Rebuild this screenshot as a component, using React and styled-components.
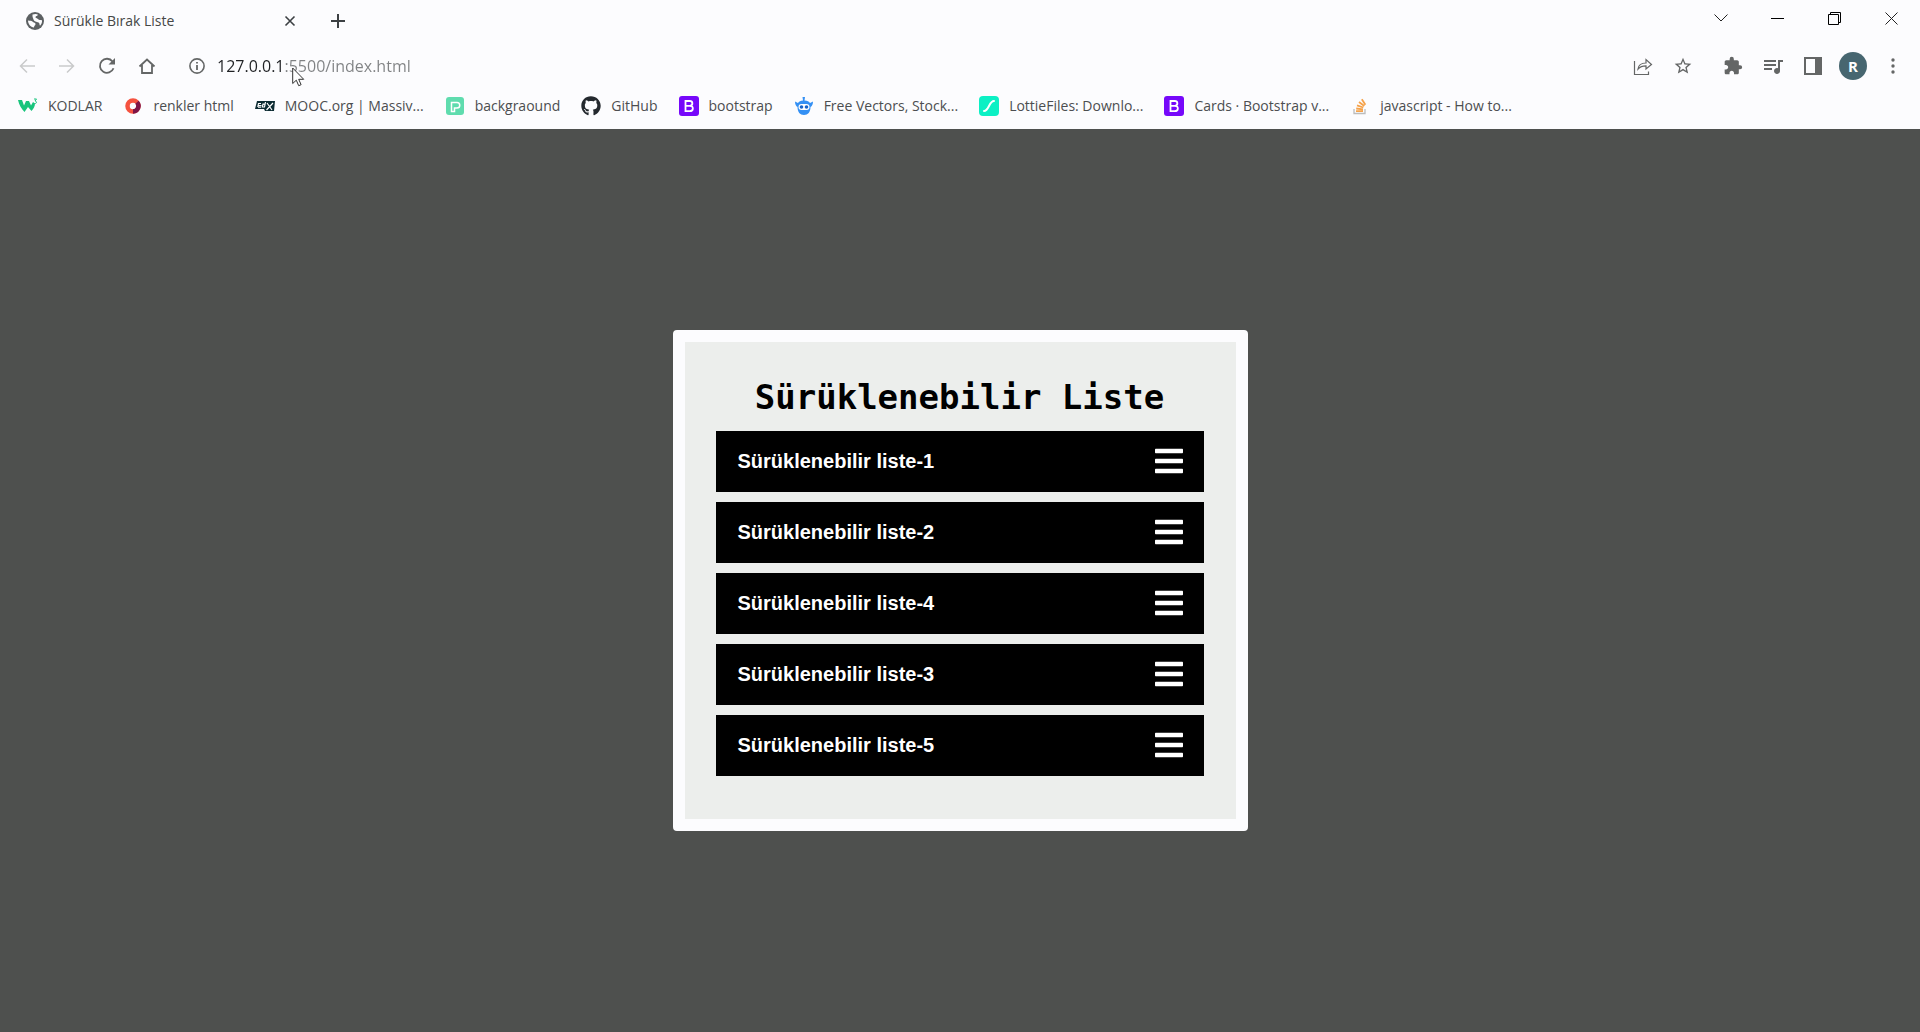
import React from "react";
import styled, { createGlobalStyle } from "styled-components";
import { FaGithub, FaBars } from "react-icons/fa";
import { MdStarOutline, MdExtension, MdQueueMusic } from "react-icons/md";

const GlobalStyle = createGlobalStyle`
  *, *::before, *::after { box-sizing: border-box; }
  html, body, #root { height: 100%; }
  body { margin: 0; font-family: "Open Sans", "Noto Sans", sans-serif; }
  button { font: inherit; color: inherit; background: none; border: 0; padding: 0; }
  svg { display: block; flex: none; }
`;

const Browser = styled.div`
  position: relative;
  min-height: 100%;
  display: flex;
  flex-direction: column;
`;

const Chrome = styled.header`
  background: #fcfcfe;
  color: #454746;
  padding-bottom: 6px;
`;

const TabStrip = styled.div`
  display: flex;
  align-items: center;
  height: 42px;
  padding-left: 26px;
`;

const Tab = styled.div`
  display: flex;
  align-items: center;
  width: 270px;
  gap: 10px;
  font-size: 14px;
  line-height: 20px;
`;

const TabTitle = styled.span`
  flex: 1;
`;

const IconButton = styled.button`
  display: grid;
  place-items: center;
  width: ${(p) => p.$w || 40}px;
  height: 36px;
  color: ${(p) => p.$color || "#646666"};
`;

const NewTab = styled(IconButton)`
  margin-left: 22px;
`;

const WindowControls = styled.div`
  display: flex;
  margin-left: auto;
  height: 36px;
  align-self: flex-start;
`;

const Toolbar = styled.div`
  display: flex;
  align-items: center;
  height: 47px;
  padding: 0 7px;
`;

const AddressBar = styled.div`
  flex: 1;
  display: flex;
  align-items: center;
  gap: 8px;
  margin-left: 18px;
`;

const AddressInput = styled.input`
  flex: 1;
  border: 0;
  padding: 0;
  background: linear-gradient(90deg, #1f2124 68px, #808284 68px);
  background-clip: text;
  -webkit-text-fill-color: transparent;
  font: 16px/24px "Open Sans", "Noto Sans", sans-serif;
`;

const ToolbarActions = styled.div`
  display: flex;
  align-items: center;
  margin-left: ${(p) => (p.$apart ? 10 : 0)}px;
`;

const Avatar = styled.button`
  width: 28px;
  height: 28px;
  margin: 0 6px;
  border-radius: 50%;
  background: #476670;
  color: #fff;
  font-size: 15px;
  line-height: 28px;
  font-weight: 700;
`;

const Bookmarks = styled.nav`
  display: flex;
  align-items: center;
  height: 34px;
  padding-left: 18px;
  gap: 21px;
`;

const Bookmark = styled.a`
  display: flex;
  align-items: center;
  gap: 10px;
  color: #4c4e50;
  font-size: 14px;
  line-height: 20px;
  text-decoration: none;
  white-space: nowrap;
`;

const Viewport = styled.main`
  flex: 1;
  display: flex;
  align-items: center;
  justify-content: center;
  background: #4e504e;
`;

const Card = styled.section`
  width: 575px;
  padding: 32px 32px 33px 31px;
  border: 12px solid #fcfcfe;
  border-radius: 4px;
  background: #eceeec;
  background-clip: padding-box;
`;

const Title = styled.h1`
  margin: 0 0 10px;
  color: #000;
  font: bold 34px/47px "DejaVu Sans Mono", monospace;
  text-align: center;
`;

const List = styled.ul`
  margin: 0;
  padding: 0;
  list-style: none;
`;

const Item = styled.li`
  display: flex;
  align-items: center;
  justify-content: space-between;
  height: 61px;
  margin-bottom: 10px;
  padding: 0 19px 2px 22px;
  background: #000;
  color: #fff;
  font: bold 20px/24px "Liberation Sans", Arial, sans-serif;
`;

const Pointer = styled.svg`
  position: absolute;
  left: 292px;
  top: 67px;
`;

const Glyph = ({ size = 20, box = 24, children, ...rest }) => (
  <svg width={size} height={size} viewBox={`0 0 ${box} ${box}`} fill="none" stroke="currentColor" strokeWidth="2" aria-hidden="true" {...rest}>
    {children}
  </svg>
);

const Globe = () => (
  <Glyph size={18} box={18} stroke="none">
    <circle cx="9" cy="9" r="9" fill="#5c6062" />
    <path d="M2 8.500c2 .3 4 .2 5 1.500 1 1 2.500.6 2.500 2 0 1.500-1.500 1.500-1.500 3.500-3.500-.5-6-3.500-6-7z" fill="#fcfcfe" />
    <path d="M6.500 2.500c3-1 4.500-.5 5.500.2-.5 1.300-2.200 1-2.500 2.300-.2 1.300 1.500 1 2.500 2 1 1.200 2.500.8 4 1.200.3 2-.5 4-2 5.500-.8-1.200-.3-2.700-1.500-3.200C10.500 9.500 8 9.500 7.500 7.500 7.200 6 6.200 5 6.500 2.500z" fill="#fcfcfe" />
  </Glyph>
);

const W3 = () => (
  <Glyph box={20} stroke="none">
    <path d="M0 4h4l2 5.500L8 5h3l2 4.500L15 6l2 1.500c0 2.500-1.500 5.500-3.500 7.500L10 11l-3.500 5C3.500 13 1 9 0 4z" fill="#18c47c" />
    <path d="M16 3h2.500L17 5c2 0 2 3-.5 2.500" stroke="#18c47c" strokeWidth="1" />
  </Glyph>
);

const Ring = () => (
  <Glyph box={20}>
    <circle cx="10" cy="10" r="5.500" stroke="#f5523f" strokeWidth="4.500" />
    <path d="M14 6.300a5.500 5.500 0 0 1-4 9.200" stroke="#7d1447" strokeWidth="4.500" />
  </Glyph>
);

const Edx = () => (
  <Glyph box={20} stroke="none">
    <path d="M2 5h18l-1 10H10l-1-2H0z" fill="#0c2b32" />
    <path d="M3 9.500h3.500M3 11.200h3M6 7.500H3.500L2.800 11M10.500 6l-1 5H7.300L8 8.200h2M12 7l5 7M18 7l-6.500 7" stroke="#fff" strokeWidth="1.200" />
  </Glyph>
);

const Patterns = () => (
  <Glyph box={20} stroke="none">
    <rect x="1" y="1" width="18" height="18" rx="3" fill="#5fdcae" />
    <path d="M6.500 15.500v-9h5.500a2.500 2.500 0 0 1 0 5.500H9.500v3.500z" stroke="#fff" strokeWidth="1.500" />
  </Glyph>
);

const Bootstrap = () => (
  <Glyph box={20} stroke="none">
    <rect width="20" height="20" rx="3" fill="#7608fa" />
    <path d="M6.500 5h4.200c3.500 0 3.500 4.600.3 4.800 4 .2 3.700 5.400-.3 5.400H6.500zM6.500 9.800H11" stroke="#fff" strokeWidth="1.800" />
  </Glyph>
);

const Robot = () => (
  <Glyph box={20} stroke="none">
    <path d="M9 4.500 8.500 1h2.500l-.5 3.500c3 0 4.500 1 5.500 2.500l3-1.500c0 3-1 4.500-2.500 5.500C16.500 16 14 19 10 19s-6.500-3-6.500-8C2 10 1 8.500 1 5.500L4 7c1-1.500 2.500-2.500 5-2.500z" fill="#3490f4" />
    <rect x="4.500" y="8" width="11" height="6" rx="3" fill="#fff" />
    <circle cx="7.500" cy="11" r="1.800" fill="#1764c9" />
    <circle cx="12.500" cy="11" r="1.800" fill="#1764c9" />
  </Glyph>
);

const Lottie = () => (
  <Glyph box={20}>
    <rect width="20" height="20" rx="4" fill="#0cf0c4" stroke="none" />
    <path d="M5 15c5 0 5-10 10-10" stroke="#fff" strokeWidth="2" strokeLinecap="round" />
  </Glyph>
);

const StackOverflow = () => (
  <Glyph box={20}>
    <path d="M4 13v4.500h11V13" stroke="#bcbcbc" strokeWidth="1.300" />
    <path d="M6 15.200h7M6.200 12.500l6.800.8M7 9.300l6.300 2.200M9 6l5.300 4M11.800 3.300l3.600 5.500" stroke="#f5a24a" strokeWidth="1.800" />
  </Glyph>
);

const bookmarks = [
  { label: "KODLAR", icon: <W3 /> },
  { label: "renkler html", icon: <Ring /> },
  { label: "MOOC.org | Massiv...", icon: <Edx /> },
  { label: "backgraound", icon: <Patterns /> },
  { label: "GitHub", icon: <FaGithub size={20} color="#24292e" /> },
  { label: "bootstrap", icon: <Bootstrap /> },
  { label: "Free Vectors, Stock...", icon: <Robot /> },
  { label: "LottieFiles: Downlo...", icon: <Lottie /> },
  { label: "Cards · Bootstrap v...", icon: <Bootstrap /> },
  { label: "javascript - How to...", icon: <StackOverflow /> },
];

const items = [1, 2, 4, 3, 5];

export default function App() {
  return (
    <Browser>
      <GlobalStyle />
      <Chrome>
        <TabStrip>
          <Tab>
            <Globe />
            <TabTitle>Sürükle Bırak Liste</TabTitle>
            <IconButton $w={12} aria-label="Close tab" $color="#3c4043">
              <Glyph size={12} box={12}><path d="M1.500 1.500l9 9M10.500 1.500l-9 9" strokeWidth="1.600" /></Glyph>
            </IconButton>
          </Tab>
          <NewTab aria-label="New tab" $color="#3c4043">
            <Glyph size={16} box={16}><path d="M8 1v14M1 8h14" /></Glyph>
          </NewTab>
          <WindowControls>
            <IconButton $w={57} $color="#222" aria-label="Search tabs">
              <Glyph size={14} box={14}><path d="M.5 3.500 7 10l6.500-6.500" strokeWidth="1" /></Glyph>
            </IconButton>
            <IconButton $w={57} $color="#000" aria-label="Minimize">
              <Glyph size={13} box={13}><path d="M0 6.500h13" strokeWidth="1" /></Glyph>
            </IconButton>
            <IconButton $w={57} $color="#000" aria-label="Restore">
              <Glyph size={13} box={13}><path d="M.5 2.500h10v10H.5zM2.500 2.500v-2h10v10h-2" strokeWidth="1" /></Glyph>
            </IconButton>
            <IconButton $w={57} $color="#222" aria-label="Close">
              <Glyph size={13} box={13}><path d="M.5.5l12 12M12.500.5l-12 12" strokeWidth="1" /></Glyph>
            </IconButton>
          </WindowControls>
        </TabStrip>
        <Toolbar>
          <IconButton $color="#c9cacb" aria-label="Back">
            <Glyph size={16} box={16}><path d="M16 8H1.500M8 1.500 1.500 8 8 14.500" strokeWidth="1.500" /></Glyph>
          </IconButton>
          <IconButton $color="#c9cacb" aria-label="Forward">
            <Glyph size={16} box={16}><path d="M0 8h14.500M8 1.500 14.500 8 8 14.500" strokeWidth="1.500" /></Glyph>
          </IconButton>
          <IconButton aria-label="Reload">
            <Glyph size={18} box={18}><path d="M15.500 11.200A7 7 0 1 1 14.500 4.500" strokeWidth="1.800" /><path d="M17 1v6.500h-6.500z" fill="currentColor" stroke="none" /></Glyph>
          </IconButton>
          <IconButton aria-label="Home">
            <Glyph size={18} box={18}><path d="M1.500 9.500 9 2.500l7.500 7M4 8v8h10V8" strokeWidth="1.800" /></Glyph>
          </IconButton>
          <AddressBar>
            <IconButton $w={24} aria-label="Site information">
              <Glyph size={16} box={16}><circle cx="8" cy="8" r="7.100" strokeWidth="1.600" /><path d="M8 7v5M8 4v1.600" strokeWidth="1.800" /></Glyph>
            </IconButton>
            <AddressInput aria-label="Address" defaultValue="127.0.0.1:5500/index.html" />
          </AddressBar>
          <ToolbarActions>
            <IconButton aria-label="Share">
              <Glyph box={20}><path d="M1.500 5v13.500h14v-3M5 13c.5-4 3.500-6 8-6V3.500l5.500 5L13 13v-3.200c-4 0-6 .8-8 3.200z" strokeWidth="1.200" /></Glyph>
            </IconButton>
            <IconButton aria-label="Bookmark this page"><MdStarOutline size={20} /></IconButton>
          </ToolbarActions>
          <ToolbarActions $apart>
            <IconButton aria-label="Extensions"><MdExtension size={20} /></IconButton>
            <IconButton aria-label="Media"><MdQueueMusic size={24} /></IconButton>
            <IconButton aria-label="Side panel">
              <Glyph size={18} box={18} stroke="none"><path fillRule="evenodd" d="M0 0h18v18H0zM2 2v14h9V2z" fill="currentColor" /></Glyph>
            </IconButton>
            <Avatar aria-label="Profile">R</Avatar>
            <IconButton aria-label="Menu">
              <Glyph size={18} box={18} stroke="none"><g fill="currentColor"><circle cx="9" cy="3" r="1.700" /><circle cx="9" cy="9" r="1.700" /><circle cx="9" cy="15" r="1.700" /></g></Glyph>
            </IconButton>
          </ToolbarActions>
        </Toolbar>
        <Bookmarks aria-label="Bookmarks">
          {bookmarks.map((b) => (
            <Bookmark href="#" key={b.label}>{b.icon}{b.label}</Bookmark>
          ))}
        </Bookmarks>
      </Chrome>
      <Viewport>
        <Card>
          <Title>Sürüklenebilir Liste</Title>
          <List>
            {items.map((n) => (
              <Item key={n} draggable>Sürüklenebilir liste-{n}<FaBars size={32} /></Item>
            ))}
          </List>
        </Card>
      </Viewport>
      <Pointer width="13" height="20" viewBox="0 0 13 20" aria-hidden="true">
        <path d="M.7 1v15.500l3.600-3.300 2.400 5.500 2.400-1-2.400-5.400h5z" fill="#fff" stroke="#333" strokeWidth="1" />
      </Pointer>
    </Browser>
  );
}
